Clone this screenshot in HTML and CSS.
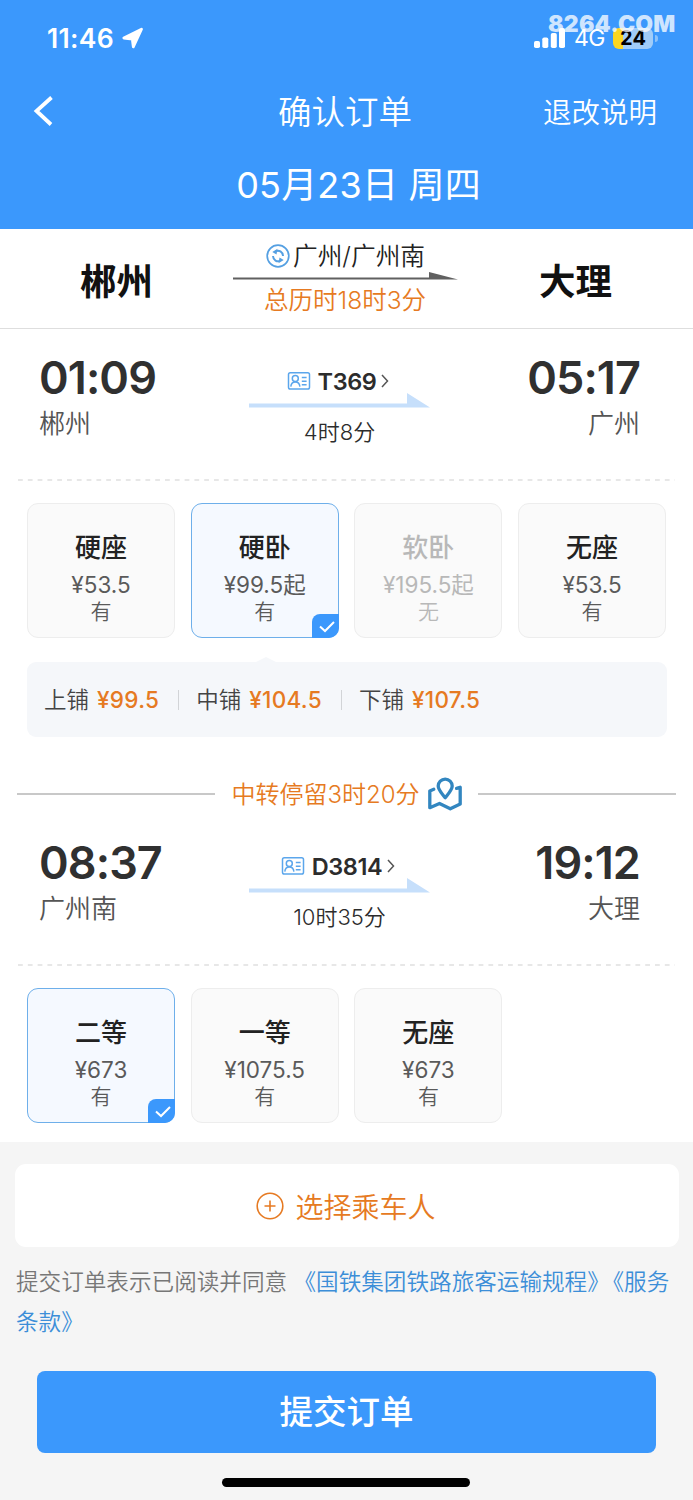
FILE: index.html
```html
<!DOCTYPE html>
<html lang="zh-CN">
<head>
<meta charset="utf-8">
<title>确认订单</title>
<link rel="stylesheet" href="styles.css">
</head>
<body>
<svg class="defs" aria-hidden="true">
  <symbol id="idcard" viewBox="0 0 24 20">
    <rect x="1.500" y="1.800" width="21" height="16.200" rx="1.800"/>
    <circle cx="8.300" cy="7.600" r="3"/>
    <path d="M3.800 15.600c.3-3 1.800-4.700 4.500-4.700s4.300 1.700 4.600 4.700M14.800 6.600h4.800M14.800 10.200h4.800M14.800 13.800h4.800"/>
  </symbol>
  <symbol id="arrow" viewBox="0 0 181 15"><path d="M0 10.500h158V0l23 14.500H0z"/></symbol>
  <symbol id="more" viewBox="0 0 8 14"><path d="M1 1l5.500 6L1 13"/></symbol>
</svg>
<div class="screen">
  <header class="header">
    <div class="status">
      <span class="clock">11:46</span>
      <svg class="locate" viewBox="0 0 22 22"><path d="M19.500 2.200L11.300 19.800L10.300 12L1.800 11Z"/></svg>
      <svg class="signal" viewBox="0 0 32 20"><rect x="0" y="13" width="6" height="7" rx="1.800"/><rect x="8.300" y="9.500" width="6" height="10.500" rx="1.800"/><rect x="16.800" y="5" width="6" height="15" rx="1.800"/><rect x="25" y="0" width="6" height="20" rx="1.800"/></svg>
      <span class="network">4G</span>
      <span class="battery">24</span><span class="battery-tip"></span>
      <span class="watermark">8264.COM</span>
    </div>
    <div class="nav">
      <svg class="back" viewBox="0 0 20 30"><path d="M18.500 1.500L3.500 15l14.500 13.500"/></svg>
      <h1 class="title">确认订单</h1>
      <span class="rules">退改说明</span>
    </div>
    <div class="date">05月23日 周四</div>
  </header>

  <section class="summary">
    <div class="city">郴州</div>
    <div class="via">
      <div class="via-name">
        <svg class="swap" viewBox="0 0 24 24"><circle cx="12" cy="12" r="10.800"/><path class="swap-arc" d="M9.500 7.300C13 5.600 16.800 7.800 17 12M14.500 16.700C11 18.400 7.200 16.200 7 12"/><path class="swap-tip" d="M11.500 4.800L6.300 8l4.200 2.500zM12.500 19.200l5.200-3.200-4.200-2.500z"/></svg>
        <span>广州/广州南</span>
      </div>
      <svg class="via-line" viewBox="0 0 225 8"><path d="M0 5.500h196V0l29 7.500H0z"/></svg>
      <div class="total">总历时18时3分</div>
    </div>
    <div class="city">大理</div>
  </section>

  <section class="leg">
    <div class="stop"><div class="time">01:09</div><div class="station">郴州</div></div>
    <div class="train">
      <div class="train-no"><svg class="idcard"><use href="#idcard"/></svg><span>T369</span><svg class="more"><use href="#more"/></svg></div>
      <svg class="arrow"><use href="#arrow"/></svg>
      <div class="duration">4时8分</div>
    </div>
    <div class="stop stop-end"><div class="time">05:17</div><div class="station">广州</div></div>
  </section>
  <svg class="dashes"><line x1="0" y1="1" x2="657" y2="1"/></svg>
  <div class="seats">
    <div class="seat"><b class="seat-name">硬座</b><span class="price">¥53.5</span><span class="stock">有</span></div>
    <div class="seat selected"><b class="seat-name">硬卧</b><span class="price">¥99.5起</span><span class="stock">有</span><svg class="check" viewBox="0 0 27 24"><path d="M8 12.500l5 4.500 9-9"/></svg></div>
    <div class="seat soldout"><b class="seat-name">软卧</b><span class="price">¥195.5起</span><span class="stock">无</span></div>
    <div class="seat"><b class="seat-name">无座</b><span class="price">¥53.5</span><span class="stock">有</span></div>
  </div>
  <div class="berths">
    <div class="berth">上铺<span class="berth-price">¥99.5</span></div>
    <div class="berth">中铺<span class="berth-price">¥104.5</span></div>
    <div class="berth">下铺<span class="berth-price">¥107.5</span></div>
  </div>

  <div class="transfer">
    <span>中转停留3时20分</span>
    <svg class="map" viewBox="0 0 36 34"><path d="M6.800 12.300L2.800 14v16.700l9.700-4.200 10.800 5.300L33.200 27V10.200l-3.600 1.200"/><path d="M18.200 20.800c-3.600-4.600-7-7.800-7-11.700a7 7 0 0 1 14 0c0 3.900-3.400 7.100-7 11.700z"/></svg>
  </div>

  <section class="leg">
    <div class="stop"><div class="time">08:37</div><div class="station">广州南</div></div>
    <div class="train">
      <div class="train-no"><svg class="idcard"><use href="#idcard"/></svg><span>D3814</span><svg class="more"><use href="#more"/></svg></div>
      <svg class="arrow"><use href="#arrow"/></svg>
      <div class="duration">10时35分</div>
    </div>
    <div class="stop stop-end"><div class="time">19:12</div><div class="station">大理</div></div>
  </section>
  <svg class="dashes"><line x1="0" y1="1" x2="657" y2="1"/></svg>
  <div class="seats">
    <div class="seat selected"><b class="seat-name">二等</b><span class="price">¥673</span><span class="stock">有</span><svg class="check" viewBox="0 0 27 24"><path d="M8 12.500l5 4.500 9-9"/></svg></div>
    <div class="seat"><b class="seat-name">一等</b><span class="price">¥1075.5</span><span class="stock">有</span></div>
    <div class="seat"><b class="seat-name">无座</b><span class="price">¥673</span><span class="stock">有</span></div>
  </div>

  <footer class="footer">
    <div class="passenger"><svg class="plus" viewBox="0 0 28 28"><circle cx="14" cy="14" r="12.800"/><path d="M8.500 14h11M14 8.500v11"/></svg><span>选择乘车人</span></div>
    <p class="terms">提交订单表示已阅读并同意 <a class="link">《国铁集团铁路旅客运输规程》</a><a class="link link-next">《服务条款》</a></p>
    <button class="submit">提交订单</button>
    <div class="home-bar"></div>
  </footer>
</div>
</body>
</html>
```

FILE: styles.css
```css
* { box-sizing: border-box; }
body {
  margin: 0;
  background: #fff;
  color: #2c2c2c;
  font-family: Inter, "Noto Sans CJK SC", sans-serif;
  font-weight: 350;
}
svg { display: block; flex: none; fill: none; }
span, div, h1, b, p { white-space: nowrap; }
.defs { position: absolute; width: 0; height: 0; }
.screen { width: 693px; height: 1500px; overflow: hidden; background: #fff; }

.header { height: 229px; background: #3b98fc; color: #fff; }
.status { position: relative; height: 76px; padding: 0 35px 0 47px; display: flex; align-items: center; }
.clock { width: 67px; font-size: 26.500px; font-weight: 600; letter-spacing: .3px; }
.locate { width: 22px; height: 22px; margin-left: 8px; fill: #fff; stroke: #fff; stroke-width: 2.800; stroke-linejoin: round; }
.signal { width: 32px; height: 20px; margin-left: auto; fill: #fff; }
.network { margin-left: 8px; width: 39px; font-size: 23px; font-weight: 400; letter-spacing: -.5px; }
.battery {
  width: 40px; height: 21px; border-radius: 6px;
  background: linear-gradient(90deg, #fcd620 24%, #a0ccf8 24%);
  color: #000; font-size: 20px; font-weight: 700; line-height: 21px; text-align: center;
}
.battery-tip { width: 3px; height: 7px; margin: 0 0 0 2px; border-radius: 0 3px 3px 0; background: #8cc2fa; }
.watermark {
  position: absolute; left: 548px; top: 10px;
  color: rgba(255,255,255,.75); font-size: 23px; line-height: 28px; font-weight: 900; letter-spacing: .2px;
}
.nav { height: 70px; padding: 0 36px 0 33px; display: grid; grid-template-columns: 1fr auto 1fr; align-items: center; }
.back { width: 20px; height: 30px; stroke: #fff; stroke-width: 3.800; }
.title { margin: 0; padding-top: 2px; font-size: 33.500px; font-weight: 350; line-height: 48px; }
.rules { justify-self: end; padding-top: 3px; font-size: 28.500px; line-height: 44px; }
.date { padding: 1px 0 0 24px; text-align: center; font-size: 36px; font-weight: 400; line-height: 76px; letter-spacing: .2px; }

.summary { height: 100px; padding: 0 81px 0 80px; border-bottom: 1px solid #dedede; display: flex; justify-content: space-between; }
.city { font-size: 36.500px; line-height: 107px; font-weight: 700; color: #111; }
.via { width: 225px; margin-right: 1px; padding-top: 11px; }
.via-name { display: flex; justify-content: center; gap: 3px; align-items: center; font-size: 24.700px; line-height: 32px; color: #222; }
.swap { width: 24px; height: 24px; stroke: #55a0e2; stroke-width: 1.700; }
.swap-arc { stroke-width: 2; }
.swap-tip { fill: #55a0e2; stroke: none; }
.via-line { width: 225px; height: 8px; fill: #606060; }
.total { padding: 1px 1px 0 0; text-align: center; color: #e67a22; font-size: 24.500px; line-height: 38px; }

.leg { height: 150px; padding: 24px 53px 0 39px; display: grid; grid-template-columns: 1fr 181px 1fr; }
.stop { display: flex; flex-direction: column; }
.stop-end { align-items: flex-end; }
.time { font-size: 45px; line-height: 50px; font-weight: 600; letter-spacing: -.9px; color: #303030; }
.station { margin-top: 1px; font-size: 26px; line-height: 40px; color: #555; }
.train { display: flex; flex-direction: column; align-items: center; padding-top: 12px; }
.train-no { height: 32px; padding-right: 3px; display: flex; align-items: center; font-size: 23.500px; font-weight: 600; letter-spacing: -.4px; }
.idcard { width: 24px; height: 20px; margin-right: 7px; stroke: #5ba6ec; stroke-width: 1.500; }
.more { width: 8px; height: 14px; margin-left: 5px; stroke: #555; stroke-width: 1.500; }
.arrow { width: 181px; height: 15px; margin-top: -4px; fill: #c6dffb; }
.duration { margin-top: 7px; font-size: 22px; line-height: 34px; }
.dashes { width: 657px; height: 2px; margin-left: 18px; stroke: #e0e0e0; stroke-width: 1.500; stroke-dasharray: 4.800 5; }

.seats { padding: 22px 27px 0; display: grid; grid-template-columns: repeat(4, 148px); gap: 15.700px; }
.seat {
  position: relative; height: 135px; padding-top: 23px;
  display: flex; flex-direction: column; align-items: center;
  border: 1.500px solid #ededed; border-radius: 11px; background: #fafafa; color: #5a5a5a;
}
.seat-name { font-size: 26px; line-height: 41px; font-weight: 500; color: #222; }
.price { font-size: 22.500px; line-height: 33px; font-weight: 400; }
.stock { font-size: 21px; line-height: 22px; }
.seat.selected { background: #f5f9ff; border-color: #6eafea; }
.seat.soldout, .soldout .seat-name { color: #b8b8b8; }
.check { position: absolute; right: -1px; bottom: -1px; width: 27px; height: 24px; border-radius: 8px 0 10px 0; background: #3b98fc; stroke: #fff; stroke-width: 2; }

.berths {
  position: relative; width: 640px; height: 75px; margin: 24px 27px 0; padding: 0 17px;
  display: flex; align-items: center; border-radius: 9px; background: #f5f7fa;
  color: #444; font-size: 22.500px;
}
.berths::before { content: ""; position: absolute; left: 229px; top: -5px; border: solid transparent; border-width: 0 10px 5px; border-bottom-color: #f5f7fa; }
.berth { display: flex; align-items: center; line-height: 32px; }
.berth-price { margin-left: 8px; color: #e67a22; font-size: 22.500px; font-weight: 500; letter-spacing: .3px; }
.berth + .berth::before { content: ""; width: 1px; height: 20px; margin: 0 17px 0 19px; background: #d2d4d7; }

.transfer { height: 40px; margin-top: 37px; padding: 0 17px; display: flex; align-items: center; color: #e67a22; font-size: 24px; line-height: 36px; }
.transfer span { padding-top: 2px; }
.transfer::before, .transfer::after { content: ""; flex: 1; height: 1.500px; background: #c8c8c8; }
.transfer::before { margin-right: 16px; }
.transfer::after { margin-left: 15px; }
.map { width: 36px; height: 34px; margin-left: 7px; stroke: #3286c0; stroke-width: 3.300; stroke-linejoin: round; stroke-linecap: round; }

.footer { height: 358px; margin-top: 19px; padding: 22px 15px 0; background: #f5f5f5; }
.passenger { width: 664px; height: 83px; padding-right: 2px; border-radius: 11px; background: #fff; display: flex; align-items: center; justify-content: center; gap: 11px; color: #e67a22; font-size: 28px; }
.plus { width: 28px; height: 28px; stroke: #e67a22; stroke-width: 1.600; }
.terms { margin: 15px 0 0 1px; width: 664px; white-space: normal; color: #777; font-size: 22.600px; line-height: 40px; }
.link { color: #3c8ed8; }
.link-next { margin-left: 3px; }
.submit { display: block; width: 619px; height: 82px; margin: 29px 0 0 22px; padding: 0; border: 0; border-radius: 8px; background: #3b98fc; color: #fff; font: 500 33.500px/82px Inter, "Noto Sans CJK SC", sans-serif; }
.home-bar { width: 248px; height: 9px; margin: 25px 0 0 207px; border-radius: 5px; background: #000; }
```
